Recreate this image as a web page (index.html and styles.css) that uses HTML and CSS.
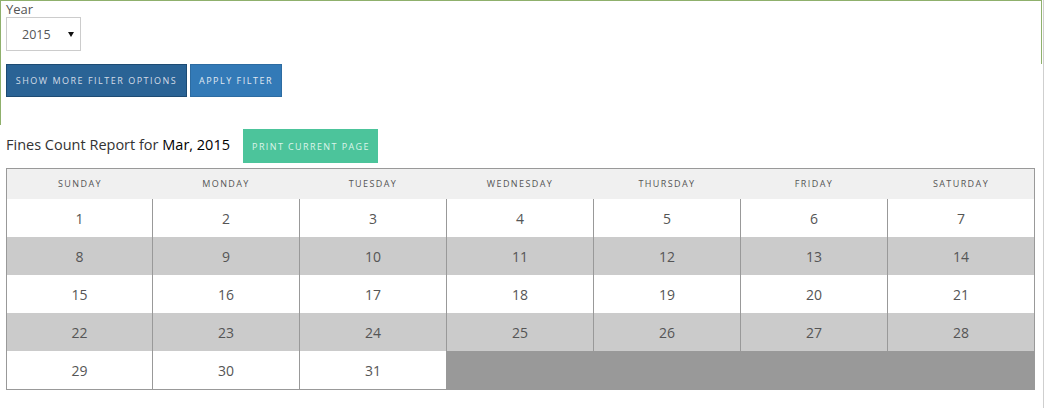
FILE: index.html
```html
<!DOCTYPE html>
<html>
<head>
<meta charset="utf-8">
<link rel="stylesheet" href="styles.css">
</head>
<body>
<div class="page">
  <div class="filter-box">
    <div class="filter-top">
      <div class="label">Year</div>
      <div class="select"><span class="select-value">2015</span><span class="caret"></span></div>
    </div>
    <div class="filter-actions">
      <button class="btn btn-dark">Show more filter options</button>
      <button class="btn btn-blue">Apply filter</button>
    </div>
  </div>

  <div class="title-row">
    <h2 class="title">Fines Count Report for <span class="month">Mar, 2015</span></h2>
    <button class="btn btn-green">Print current page</button>
  </div>

  <div class="cal">
    <div class="head">Sunday</div>
    <div class="head">Monday</div>
    <div class="head">Tuesday</div>
    <div class="head">Wednesday</div>
    <div class="head">Thursday</div>
    <div class="head">Friday</div>
    <div class="head">Saturday</div>

    <div class="day">1</div><div class="day">2</div><div class="day">3</div><div class="day">4</div><div class="day">5</div><div class="day">6</div><div class="day">7</div>
    <div class="day alt">8</div><div class="day alt">9</div><div class="day alt">10</div><div class="day alt">11</div><div class="day alt">12</div><div class="day alt">13</div><div class="day alt">14</div>
    <div class="day">15</div><div class="day">16</div><div class="day">17</div><div class="day">18</div><div class="day">19</div><div class="day">20</div><div class="day">21</div>
    <div class="day alt">22</div><div class="day alt">23</div><div class="day alt">24</div><div class="day alt">25</div><div class="day alt">26</div><div class="day alt">27</div><div class="day alt">28</div>
    <div class="day">29</div><div class="day">30</div><div class="day">31</div><div class="day empty"></div>
  </div>
</div>
</body>
</html>
```

FILE: styles.css
```css
html, body {
  margin: 0;
  padding: 0;
  background: #fff;
}
body {
  font-family: "Open Sans", "Liberation Sans", sans-serif;
  color: #555;
}
.page {
  width: 1044px;
  height: 408px;
  border-right: 1px solid #cfcfcf;
  box-sizing: border-box;
}
.filter-box {
  width: 1042px;
  height: 125px;
  box-sizing: border-box;
  border-top: 1px solid #8fb06c;
  border-left: 1px solid #8fb06c;
}
.filter-top {
  height: 63px;
  box-sizing: border-box;
  border-right: 1px solid #8fb06c;
  padding-left: 5px;
}
.label {
  font-size: 13px;
  line-height: 16px;
  color: #555;
}
.select {
  width: 75px;
  height: 34px;
  box-sizing: border-box;
  border: 1px solid #ccc;
  display: flex;
  align-items: center;
  padding-left: 15px;
  font-size: 12.5px;
  color: #555;
}
.select-value {
  flex: none;
}
.caret {
  margin-left: 17px;
  width: 0;
  height: 0;
  border-left: 3px solid transparent;
  border-right: 3px solid transparent;
  border-top: 5px solid #111;
}
.filter-actions {
  display: flex;
  gap: 3px;
  padding-left: 5px;
}
.btn {
  font-family: "Open Sans", "Liberation Sans", sans-serif;
  text-transform: uppercase;
  border: 1px solid transparent;
  margin: 0;
  box-sizing: border-box;
  cursor: pointer;
}
.btn-dark, .btn-blue {
  height: 33px;
  font-size: 9px;
  letter-spacing: 1.5px;
  padding: 0;
}
.btn-dark {
  width: 181px;
  background: #2a6395;
  border-color: #1d4b73;
  color: #d4dce7;
}
.btn-blue {
  width: 92px;
  background: #337ab7;
  border-color: #2d6ca2;
  color: #e0e9f2;
}
.title-row {
  display: flex;
  align-items: center;
  margin-top: 4px;
  padding-left: 6px;
  gap: 13px;
}
.title {
  margin: 0;
  font-size: 14.5px;
  font-weight: normal;
  color: #333;
  line-height: 20px;
  position: relative;
  top: -1px;
}
.month {
  color: #000;
}
.btn-green {
  width: 135px;
  height: 34px;
  background: #4cc49b;
  border-color: #4cc49b;
  color: #dcf4ea;
  font-size: 9px;
  letter-spacing: 1.4px;
  padding: 0 0 0 1px;
}
.cal {
  margin: 5px 0 0 6px;
  width: 1029px;
  box-sizing: border-box;
  border: 1px solid #999;
  display: grid;
  grid-template-columns: 145px repeat(6, 147px);
  grid-auto-rows: 38px;
  grid-template-rows: 30px;
}
.head {
  background: #f0f0f0;
  font-size: 9px;
  letter-spacing: 1.4px;
  text-transform: uppercase;
  color: #555;
  display: flex;
  align-items: center;
  justify-content: center;
  padding-left: 1px;
  padding-bottom: 1px;
}
.day {
  display: flex;
  align-items: center;
  justify-content: center;
  font-size: 14px;
  color: #555;
  background: #fff;
  border-left: 1px solid #999;
}
.day:nth-child(7n+1) {
  border-left: none;
}
.day.alt {
  background: #cbcbcb;
}
.day.empty {
  grid-column: span 4;
  background: #999;
}
```
